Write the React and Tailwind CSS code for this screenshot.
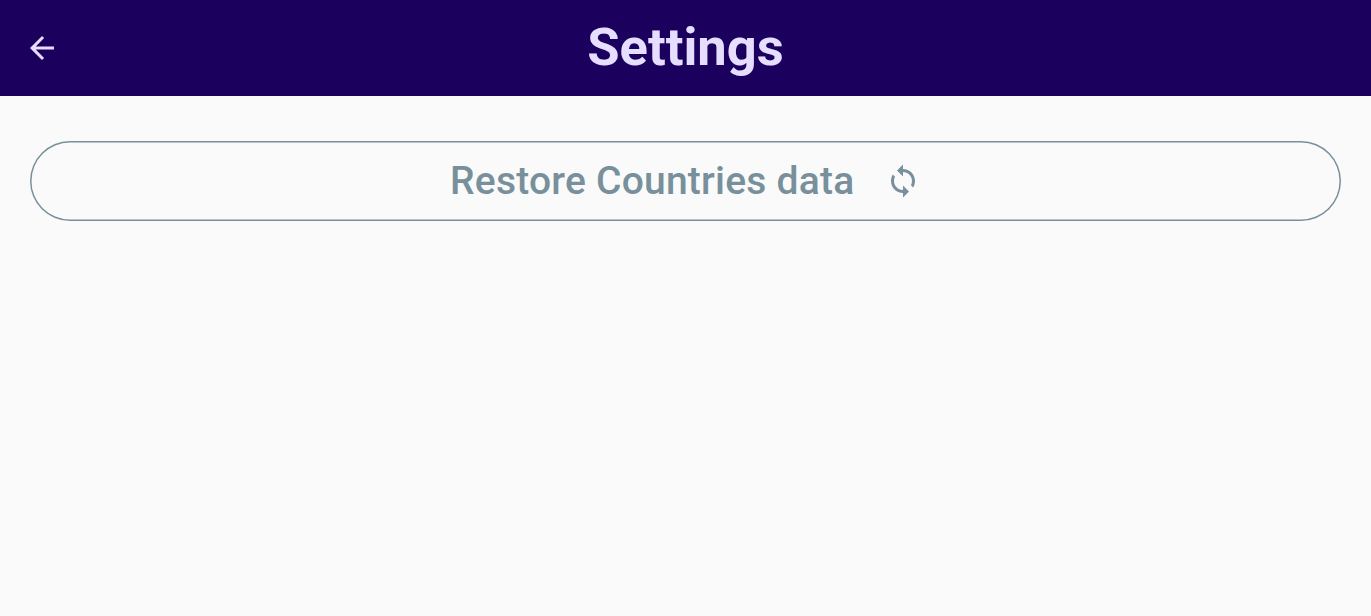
import React from "react";

function BackIcon() {
  return (
    <svg className="size-9" viewBox="0 0 24 24" fill="currentColor" aria-hidden="true">
      <path d="M20 11H7.83l5.59-5.59L12 4l-8 8 8 8 1.41-1.41L7.83 13H20v-2z" />
    </svg>
  );
}

function SyncIcon() {
  return (
    <svg className="size-9" viewBox="0 0 24 24" fill="currentColor" aria-hidden="true">
      <path d="M12 4V1L8 5l4 4V6c3.31 0 6 2.69 6 6 0 1.01-.25 1.97-.7 2.8l1.46 1.46C19.54 15.03 20 13.57 20 12c0-4.42-3.58-8-8-8zm0 14c-3.31 0-6-2.69-6-6 0-1.01.25-1.97.7-2.8L5.24 7.74C4.46 8.97 4 10.43 4 12c0 4.42 3.58 8 8 8v3l4-4-4-4v3z" />
    </svg>
  );
}

export default function App() {
  return (
    <div className="flex h-screen flex-col bg-[#fafafa] font-['Roboto',sans-serif]">
      <header className="grid h-24 shrink-0 grid-cols-[1fr_auto_1fr] items-center bg-[#1b005d] px-6 text-[#e6deff]">
        <button className="justify-self-start" aria-label="Back">
          <BackIcon />
        </button>
        <h1 className="pb-0.5 text-[52.5px] leading-none font-bold">Settings</h1>
      </header>
      <main className="px-[30px] pt-[45px]">
        <button className="flex h-20 w-full items-center justify-center rounded-full text-[#78909c] shadow-[inset_0_0_0_1.5px_#78909c]">
          <span className="text-[39px] leading-none font-medium tracking-[0.22px]">Restore Countries data</span>
          <span className="ml-[30.5px]">
            <SyncIcon />
          </span>
        </button>
      </main>
    </div>
  );
}
